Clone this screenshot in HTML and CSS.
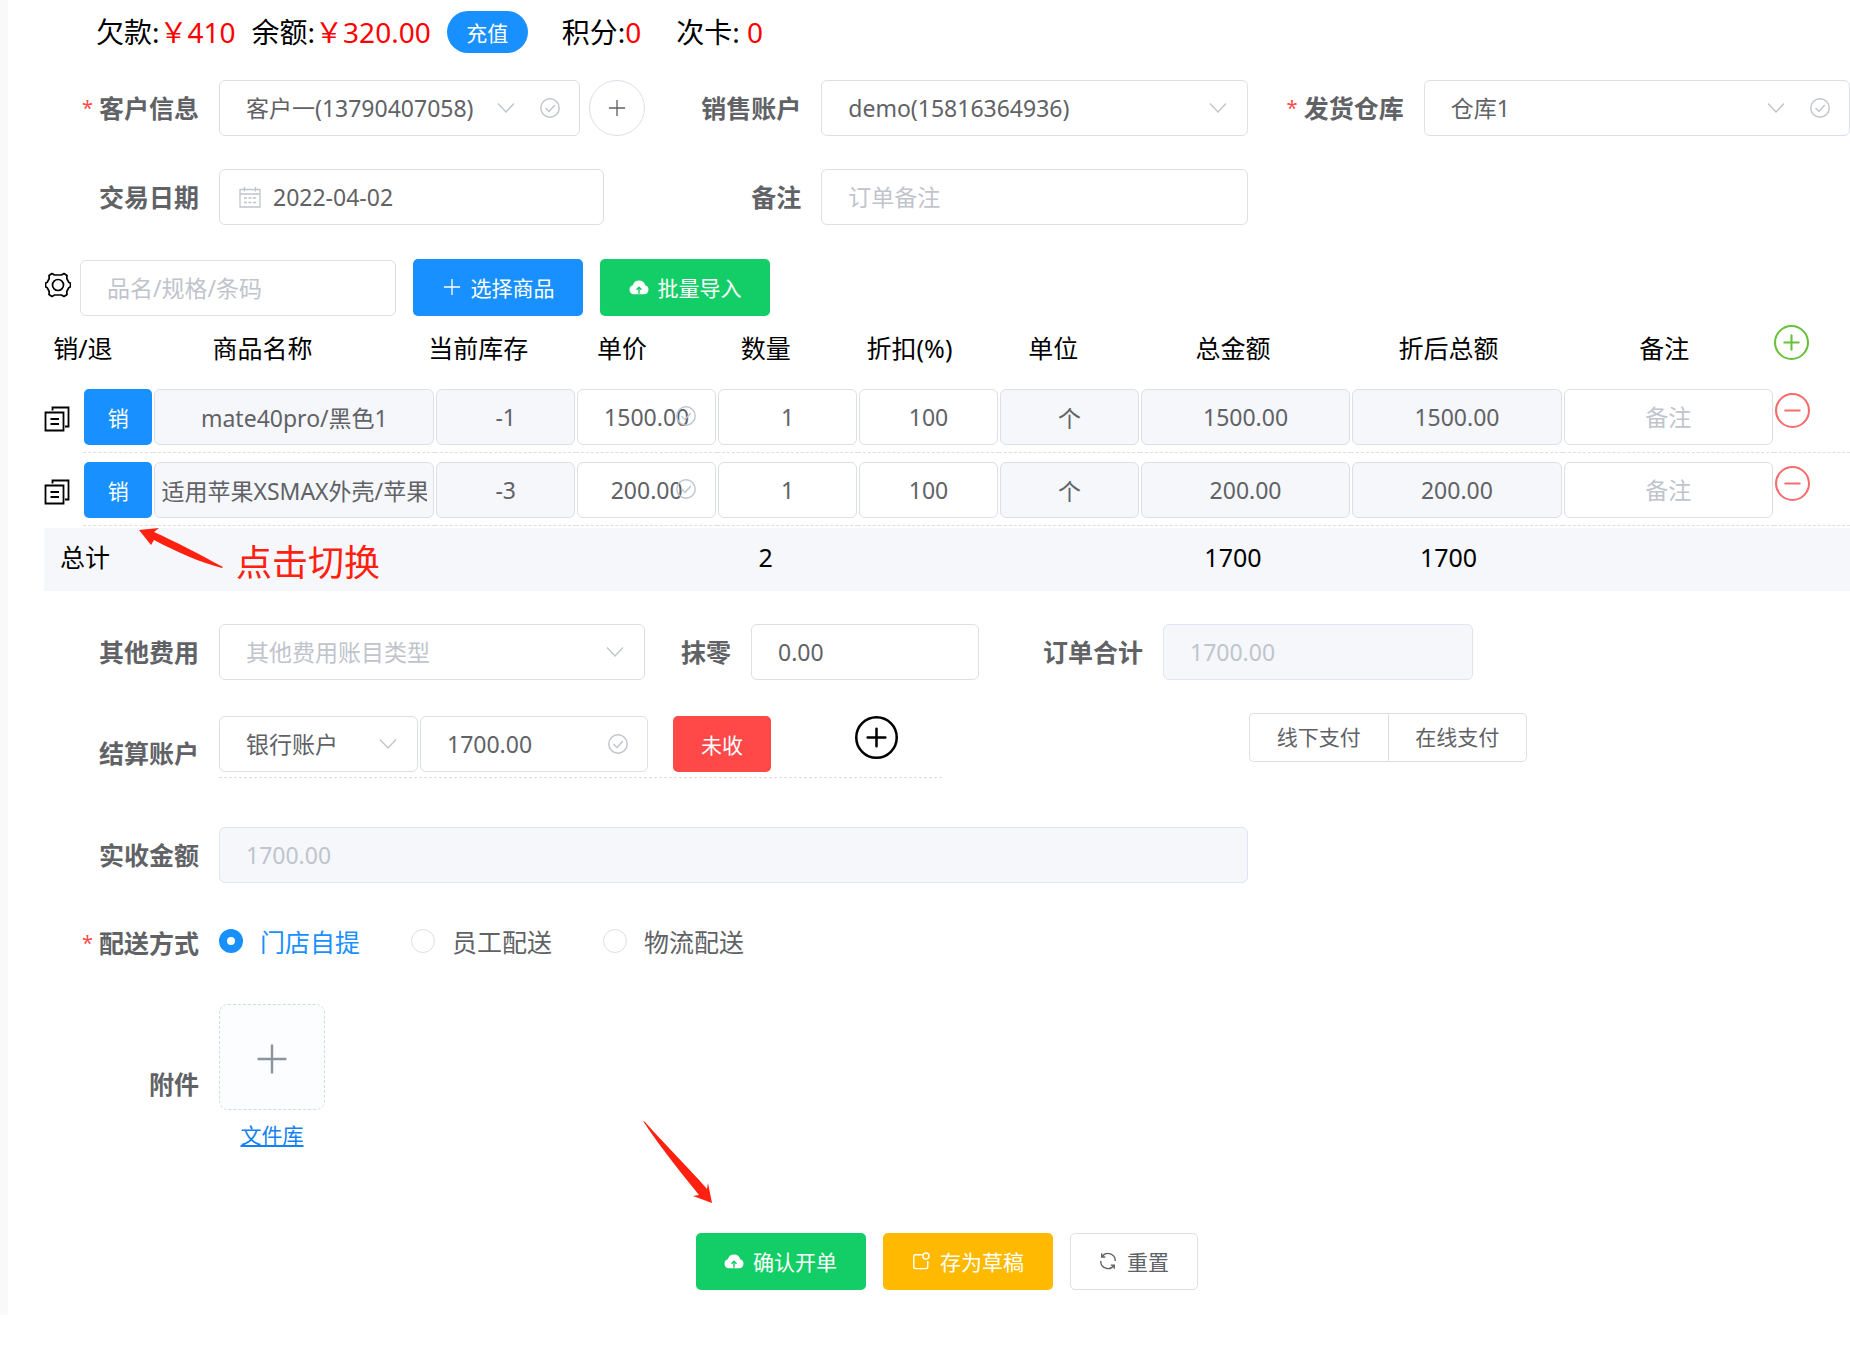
FILE: index.html
```
<!DOCTYPE html>
<html lang="zh-CN">
<head>
<meta charset="utf-8">
<title>销售开单</title>
<link rel="stylesheet" href="styles.css">
</head>
<body>
<svg class="sprite" aria-hidden="true">
  <symbol id="i-chevron" viewBox="0 0 20 20"><path d="M2 5.500l8 8.500 8-8.500" fill="none" stroke="currentColor" stroke-width="1.400"/></symbol>
  <symbol id="i-check" viewBox="0 0 20 20"><circle cx="10" cy="10" r="9.200" fill="none" stroke="currentColor" stroke-width="1.400"/><path d="M5.500 10l3.500 3.500 5.800-6.500" fill="none" stroke="currentColor" stroke-width="1.400"/></symbol>
  <symbol id="i-plus" viewBox="0 0 20 20"><path d="M10 1v18M1 10h18" fill="none" stroke="currentColor" stroke-width="1.500"/></symbol>
  <symbol id="i-calendar" viewBox="0 0 22 22"><path d="M1 3.500h20v17.500H1zM1 8h20M5.500 1v4.500M16.500 1v4.500" fill="none" stroke="currentColor" stroke-width="1.300"/><path d="M5 12h3M9.500 12h3M14 12h3M5 16.500h3M9.500 16.500h3M14 16.500h3" stroke="currentColor" stroke-width="1.400"/></symbol>
  <symbol id="i-gear" viewBox="0 0 26 26"><path d="M7 1.500L9.500 3h7L19 1.500l3 2-.2 3 2 3.800 1.700 1v3.400l-1.700 1-2 3.800.2 3-3 2-2.500-1.500h-7L7 24.500l-3-2 .2-3-2-3.800-1.700-1v-3.400l1.700-1 2-3.800-.2-3z" fill="none" stroke="currentColor" stroke-width="1.700" stroke-linejoin="round"/><circle cx="13" cy="13" r="5.500" fill="none" stroke="currentColor" stroke-width="1.700"/></symbol>
  <symbol id="i-copy" viewBox="0 0 26 26"><path d="M1.500 6.500h18v18h-18zM8.500 4.500v-3h16v19H21M6.500 13h8.500M6.500 18h8.500" fill="none" stroke="currentColor" stroke-width="1.800"/></symbol>
  <symbol id="i-cloud" viewBox="0 0 20 16"><path d="M5 15.200A4.600 4.600 0 0 1 3.800 6.200 6.400 6.400 0 0 1 16.200 6.200 4.600 4.600 0 0 1 15 15.200z" fill="currentColor"/><path d="M10 14.800V9M7.500 10.800L10 8.200l2.500 2.600" fill="none" stroke="#13ce66" stroke-width="1.400"/></symbol>
  <symbol id="i-draft" viewBox="0 0 20 20"><path d="M11 3H4a2 2 0 0 0-2 2v11.500a2 2 0 0 0 2 2h11.500a2 2 0 0 0 2-2V10" fill="none" stroke="currentColor" stroke-width="1.600"/><circle cx="15.500" cy="4.500" r="3.400" fill="none" stroke="currentColor" stroke-width="1.600"/></symbol>
  <symbol id="i-refresh" viewBox="0 0 20 20"><path d="M3.500 5A8 8 0 0 1 18 10M16.500 15A8 8 0 0 1 2 10M3 1.500V5.500h4M17 18.500V14.500h-4" fill="none" stroke="currentColor" stroke-width="1.500"/></symbol>
  <symbol id="i-circle-plus" viewBox="0 0 34 34"><circle cx="17" cy="17" r="16" fill="none" stroke="currentColor" stroke-width="2"/><path d="M17 10v14M10 17h14" stroke="currentColor" stroke-width="2" stroke-linecap="round"/></symbol>
  <symbol id="i-circle-minus" viewBox="0 0 34 34"><circle cx="17" cy="17" r="16" fill="none" stroke="currentColor" stroke-width="2"/><path d="M10 17h14" stroke="currentColor" stroke-width="2" stroke-linecap="round"/></symbol>
</svg>

<main class="app">
  <div class="balance">
    <span>欠款:<b>￥410</b></span>
    <span class="balance-left">余额:<b>￥320.00</b></span>
    <button class="recharge" type="button">充值</button>
    <span class="points">积分:<b>0</b></span>
    <span class="cards">次卡: <b>0</b></span>
  </div>

  <form>
    <div class="grid-three">
      <label class="label required" for="customer">客户信息</label>
      <div class="with-add">
        <div class="field"><select id="customer" class="control"><option>客户一(13790407058)</option></select><svg class="icon second"><use href="#i-chevron"/></svg><svg class="icon first"><use href="#i-check"/></svg></div>
        <button class="round-add" type="button" aria-label="新增客户"><svg><use href="#i-plus"/></svg></button>
      </div>
      <label class="label" for="seller">销售账户</label>
      <div class="field"><select id="seller" class="control"><option>demo(15816364936)</option></select><svg class="icon first"><use href="#i-chevron"/></svg></div>
      <label class="label required" for="store">发货仓库</label>
      <div class="field"><select id="store" class="control"><option>仓库1</option></select><svg class="icon second"><use href="#i-chevron"/></svg><svg class="icon first"><use href="#i-check"/></svg></div>

      <label class="label" for="date">交易日期</label>
      <div class="field date"><input id="date" class="control" type="text" value="2022-04-02"><svg class="icon lead"><use href="#i-calendar"/></svg></div>
      <label class="label" for="note">备注</label>
      <div class="field"><input id="note" class="control" type="text" placeholder="订单备注"></div>
    </div>

    <div class="toolbar">
      <svg class="gear"><use href="#i-gear"/></svg>
      <input class="control search" type="text" placeholder="品名/规格/条码" aria-label="品名/规格/条码">
      <button class="btn primary" type="button"><svg><use href="#i-plus"/></svg>选择商品</button>
      <button class="btn success" type="button"><svg><use href="#i-cloud"/></svg>批量导入</button>
    </div>

    <table class="goods">
      <thead>
        <tr><th>销/退</th><th>商品名称</th><th>当前库存</th><th>单价</th><th>数量</th><th>折扣(%)</th><th>单位</th><th>总金额</th><th>折后总额</th><th>备注</th><th class="act add"><svg><use href="#i-circle-plus"/></svg></th></tr>
      </thead>
      <tbody>
        <tr>
          <td class="copy"><svg><use href="#i-copy"/></svg></td>
          <td><button class="toggle" type="button">销</button></td>
          <td><input class="control" aria-label="商品名称" value="mate40pro/黑色1" readonly></td>
          <td><input class="control" aria-label="当前库存" value="-1" readonly></td>
          <td><div class="field"><input class="control price" aria-label="单价" value="1500.00"><svg class="icon price-icon"><use href="#i-check"/></svg></div></td>
          <td><input class="control" aria-label="数量" value="1"></td>
          <td><input class="control" aria-label="折扣" value="100"></td>
          <td><input class="control" aria-label="单位" value="个" readonly></td>
          <td><input class="control" aria-label="总金额" value="1500.00" readonly></td>
          <td><input class="control" aria-label="折后总额" value="1500.00" readonly></td>
          <td><input class="control" aria-label="备注" placeholder="备注"></td>
          <td class="act remove"><svg><use href="#i-circle-minus"/></svg></td>
        </tr>
        <tr>
          <td class="copy"><svg><use href="#i-copy"/></svg></td>
          <td><button class="toggle" type="button">销</button></td>
          <td><input class="control" aria-label="商品名称" value="适用苹果XSMAX外壳/苹果XSMAX" readonly></td>
          <td><input class="control" aria-label="当前库存" value="-3" readonly></td>
          <td><div class="field"><input class="control price" aria-label="单价" value="200.00"><svg class="icon price-icon"><use href="#i-check"/></svg></div></td>
          <td><input class="control" aria-label="数量" value="1"></td>
          <td><input class="control" aria-label="折扣" value="100"></td>
          <td><input class="control" aria-label="单位" value="个" readonly></td>
          <td><input class="control" aria-label="总金额" value="200.00" readonly></td>
          <td><input class="control" aria-label="折后总额" value="200.00" readonly></td>
          <td><input class="control" aria-label="备注" placeholder="备注"></td>
          <td class="act remove"><svg><use href="#i-circle-minus"/></svg></td>
        </tr>
      </tbody>
      <tfoot>
        <tr><td>总计</td><td></td><td></td><td></td><td>2</td><td></td><td></td><td>1700</td><td>1700</td><td></td><td></td></tr>
      </tfoot>
    </table>

    <div class="fees">
      <label class="label" for="fee">其他费用</label>
      <div class="field"><select id="fee" class="control empty"><option>其他费用账目类型</option></select><svg class="icon first"><use href="#i-chevron"/></svg></div>
      <label class="label" for="round">抹零</label>
      <input id="round" class="control" value="0.00">
      <label class="label" for="total">订单合计</label>
      <input id="total" class="control" value="1700.00" disabled>
    </div>

    <div class="settle">
      <label class="label settle-label" for="account">结算账户</label>
      <div class="settle-line">
        <div class="field account"><select id="account" class="control"><option>银行账户</option></select><svg class="icon first"><use href="#i-chevron"/></svg></div>
        <div class="field amount"><input class="control" aria-label="金额" value="1700.00"><svg class="icon first"><use href="#i-check"/></svg></div>
        <button class="unpaid" type="button">未收</button>
        <svg class="add-line"><use href="#i-circle-plus"/></svg>
      </div>
      <div class="pay-group"><button type="button">线下支付</button><button type="button">在线支付</button></div>
    </div>

    <div class="grid-three received">
      <label class="label" for="received">实收金额</label>
      <input id="received" class="control wide" value="1700.00" disabled>
    </div>

    <div class="line delivery">
      <span class="label required">配送方式</span>
      <div class="radios">
        <label><input type="radio" name="delivery" checked><span>门店自提</span></label>
        <label><input type="radio" name="delivery"><span>员工配送</span></label>
        <label><input type="radio" name="delivery"><span>物流配送</span></label>
      </div>
    </div>

    <div class="line attach">
      <span class="label">附件</span>
      <div class="upload">
        <button class="tile" type="button" aria-label="上传附件"><svg><use href="#i-plus"/></svg></button>
        <a href="#">文件库</a>
      </div>
    </div>

    <div class="actions">
      <button class="btn success" type="button"><svg><use href="#i-cloud"/></svg>确认开单</button>
      <button class="btn warning" type="button"><svg><use href="#i-draft"/></svg>存为草稿</button>
      <button class="btn plain" type="button"><svg><use href="#i-refresh"/></svg>重置</button>
    </div>
  </form>

  <div class="tip tip-toggle">
    <svg viewBox="0 0 86 42"><path d="M0 2L20 0 15 4C35 13 60 26 84 39L83 40C60 34 38 24 15 12L12 17z" fill="#ff2010"/></svg>
    <span>点击切换</span>
  </div>
  <svg class="tip tip-confirm" viewBox="0 0 72 84"><path d="M0 0L2 1C25 27 45 46 64 68L65 62 69 82 50 75 56 74C40 54 20 30 0 0z" fill="#ff2010"/></svg>
</main>
</body>
</html>
```
FILE: styles.css
```
* { box-sizing: border-box; }

body {
  margin: 0;
  background: #fff;
  color: #000;
  font-family: "Noto Sans", "Noto Sans CJK SC", sans-serif;
  font-size: 25px;
}

button, input, select { font-family: inherit; margin: 0; }
button { cursor: pointer; }
.sprite { display: none; }
svg { display: block; flex: none; }

.app {
  position: relative;
  overflow: hidden;
  border-left: 8px solid #f9f9f9;
  padding: 0 0 25px 35px;
}

/* Customer balance */
.balance {
  display: flex;
  align-items: center;
  height: 64px;
  margin-bottom: 16px;
  padding-left: 53px;
  font-size: 28px;
  line-height: 40px;
  white-space: nowrap;
}
.balance b { font-weight: 400; color: #f00; }
.balance-left { margin-left: 16px; }
.points { margin-left: 34px; }
.cards { margin-left: 35px; }
.recharge {
  width: 81px;
  height: 42px;
  margin-left: 16px;
  padding: 0;
  border: 0;
  border-radius: 21px;
  background: #1890ff;
  color: #fff;
  font-size: 21px;
}

/* Form fields */
.grid-three {
  display: grid;
  grid-template-columns: repeat(3, 176px minmax(0, 1fr));
  row-gap: 33px;
}
.label {
  height: 56px;
  padding-right: 20px;
  color: #606266;
  font-size: 25px;
  font-weight: 700;
  line-height: 56px;
  text-align: right;
  white-space: nowrap;
}
.required::before {
  content: "*";
  margin-right: 6px;
  color: #ff4949;
  font-size: 20px;
  font-weight: 400;
  line-height: 20px;
  vertical-align: 3px;
}
.field { position: relative; min-width: 0; }
.control {
  display: block;
  width: 100%;
  height: 56px;
  padding: 0 26px;
  border: 1px solid #dcdfe6;
  border-radius: 6px;
  outline: 0;
  background: #fff;
  color: #606266;
  font-size: 23px;
  appearance: none;
}
.control::placeholder { color: #c0c4cc; opacity: 1; }
.control:disabled {
  border-color: #dfe4ed;
  background: #f5f7fa;
  color: #c0c4cc;
}
.control.empty { color: #c0c4cc; }
.icon {
  position: absolute;
  top: 18px;
  width: 20px;
  height: 20px;
  color: #c0c4cc;
  pointer-events: none;
}
.first { right: 20px; }
.second { right: 64px; }
.lead { left: 20px; width: 22px; height: 22px; top: 17px; }
.with-add { display: flex; gap: 9px; }
.with-add .field { flex: 1; }
.round-add {
  display: grid;
  place-items: center;
  width: 56px;
  height: 56px;
  padding: 0;
  border: 1px solid #dcdfe6;
  border-radius: 50%;
  background: #fff;
  color: #606266;
}
.round-add svg { width: 18px; height: 18px; }
.date { margin-right: 41px; }
.date .control { padding-left: 53px; }

/* Buttons */
.btn {
  display: flex;
  align-items: center;
  justify-content: center;
  gap: 9px;
  width: 170px;
  height: 57px;
  padding: 0 0 2px;
  border: 0;
  border-radius: 5px;
  color: #fff;
  font-size: 21px;
}
.btn svg { width: 20px; height: 18px; }
.primary { background: #1890ff; }
.success { background: #13ce66; }
.warning { background: #ffba00; }
.plain {
  width: 128px;
  border: 1px solid #dcdfe6;
  background: #fff;
  color: #606266;
}

.toolbar {
  display: flex;
  align-items: center;
  margin-top: 34px;
}
.gear { width: 26px; height: 26px; margin: 0 9px 6px 2px; }
.search { width: 316px; }
.toolbar .btn { margin-left: 17px; }

/* Goods table */
.goods { display: block; padding-left: 1px; }
.goods thead, .goods tbody, .goods tfoot { display: block; }
.goods tr {
  display: grid;
  grid-template-columns:
    minmax(0, 1fr) minmax(0, 4fr) repeat(5, minmax(0, 2fr))
    repeat(3, minmax(0, 3fr)) 78px;
  align-items: center;
  padding-left: 3px;
}
.goods th { padding: 0; font-weight: 400; white-space: nowrap; }
.goods tfoot td:first-child { padding-left: 4px; }
.goods thead tr { height: 64px; padding-bottom: 2px; }
.goods tbody tr {
  grid-template-columns:
    39px minmax(0, 1fr) minmax(0, 4fr) repeat(5, minmax(0, 2fr))
    repeat(3, minmax(0, 3fr)) 76px;
  padding-left: 0;
}
.goods tbody td {
  height: 73px;
  padding: 9px 1px 7px;
  border-bottom: 1px dashed #dcdfe6;
}
.goods tbody .copy { padding: 26px 0 0; border-bottom: 0; }
.copy svg { width: 26px; height: 26px; }
.act svg { width: 35px; height: 35px; }
.add { color: #67c23a; }
.add svg { margin: -10px 0 0 2px; }
.goods tbody .remove { color: #f56c6c; padding-top: 13px; }
.goods tbody .control { padding: 0 6px; text-align: center; }
.goods tbody .control:read-only { background: #f5f7fa; }
.price-icon { right: 20px; top: 17px; }
.toggle {
  display: block;
  width: 100%;
  height: 56px;
  padding: 0;
  border: 0;
  border-radius: 5px;
  background: #1890ff;
  color: #fff;
  font-size: 21px;
}
.goods tfoot { margin-top: 2px; background: #f5f7fa; }
.goods tfoot tr { height: 63px; padding-bottom: 5px; }
.goods tfoot td { padding: 0; text-align: center; white-space: nowrap; line-height: 56px; }

/* Totals and settlement */
.fees {
  display: grid;
  grid-template-columns: 176px 426fr 106px 228fr 184px 310fr 377fr;
  margin-top: 33px;
}
.settle {
  display: grid;
  grid-template-columns: 176px 723fr 307fr 278px 323fr;
  margin-top: 33px;
}
.settle-label { height: 65px; padding-top: 12px; }
.settle-line {
  display: flex;
  align-items: flex-start;
  height: 65px;
  padding-top: 3px;
  border-bottom: 1px dashed #dcdfe6;
}
.account { width: 199px; margin-right: 2px; }
.amount { width: 228px; margin-right: 25px; }
.unpaid {
  width: 98px;
  height: 56px;
  padding: 0;
  border: 0;
  border-radius: 5px;
  background: #ff4949;
  color: #fff;
  font-size: 21px;
}
.add-line { width: 43px; height: 43px; margin-left: 84px; }
.pay-group { display: flex; grid-column: 4; }
.pay-group button {
  flex: 1;
  height: 49px;
  padding: 0 0 4px;
  border: 1px solid #dcdfe6;
  background: #fff;
  color: #606266;
  font-size: 21px;
}
.pay-group button:first-child { border-radius: 5px 0 0 5px; border-right: 0; }
.pay-group button:last-child { border-radius: 0 5px 5px 0; }
.received { margin-top: 49px; }
.wide { grid-column: 2 / 5; }

/* Delivery and attachments */
.line { display: grid; grid-template-columns: 176px minmax(0, 1fr); align-items: center; }
.delivery { margin-top: 32px; }
.radios { display: flex; gap: 51px; color: #606266; margin-bottom: 5px; }
.radios label { display: flex; align-items: center; gap: 17px; }
.radios input {
  appearance: none;
  width: 24px;
  height: 24px;
  margin: 0;
  border: 1px solid #dcdfe6;
  border-radius: 50%;
  background: #fff;
}
.radios input:checked { border: 8px solid #1890ff; }
.radios input:checked + span { color: #1890ff; }
.attach { margin-top: 33px; }
.attach .label { height: auto; padding-top: 10px; }
.upload {
  display: flex;
  flex-direction: column;
  align-items: center;
  width: 106px;
}
.tile {
  display: grid;
  place-items: center;
  width: 106px;
  height: 106px;
  padding: 3px 0 0;
  border: 1px dashed #d5d8de;
  border-radius: 9px;
  background: #fbfdff;
  color: #8c939d;
}
.tile svg { width: 32px; height: 32px; }
.upload a { margin-top: 6px; color: #1181f5; font-size: 21px; line-height: 38px; }
.actions {
  display: flex;
  justify-content: center;
  gap: 17px;
  margin-top: 79px;
}

/* Guide marks laid over the form */
.tip { position: absolute; pointer-events: none; }
.tip-toggle { left: 131px; top: 528px; display: flex; }
.tip-toggle svg { width: 86px; height: 42px; }
.tip-toggle span {
  margin: 9px 0 0 11px;
  color: #ff2010;
  font-size: 36px;
  line-height: 52px;
}
.tip-confirm { left: 635px; top: 1121px; width: 72px; height: 84px; }
```
